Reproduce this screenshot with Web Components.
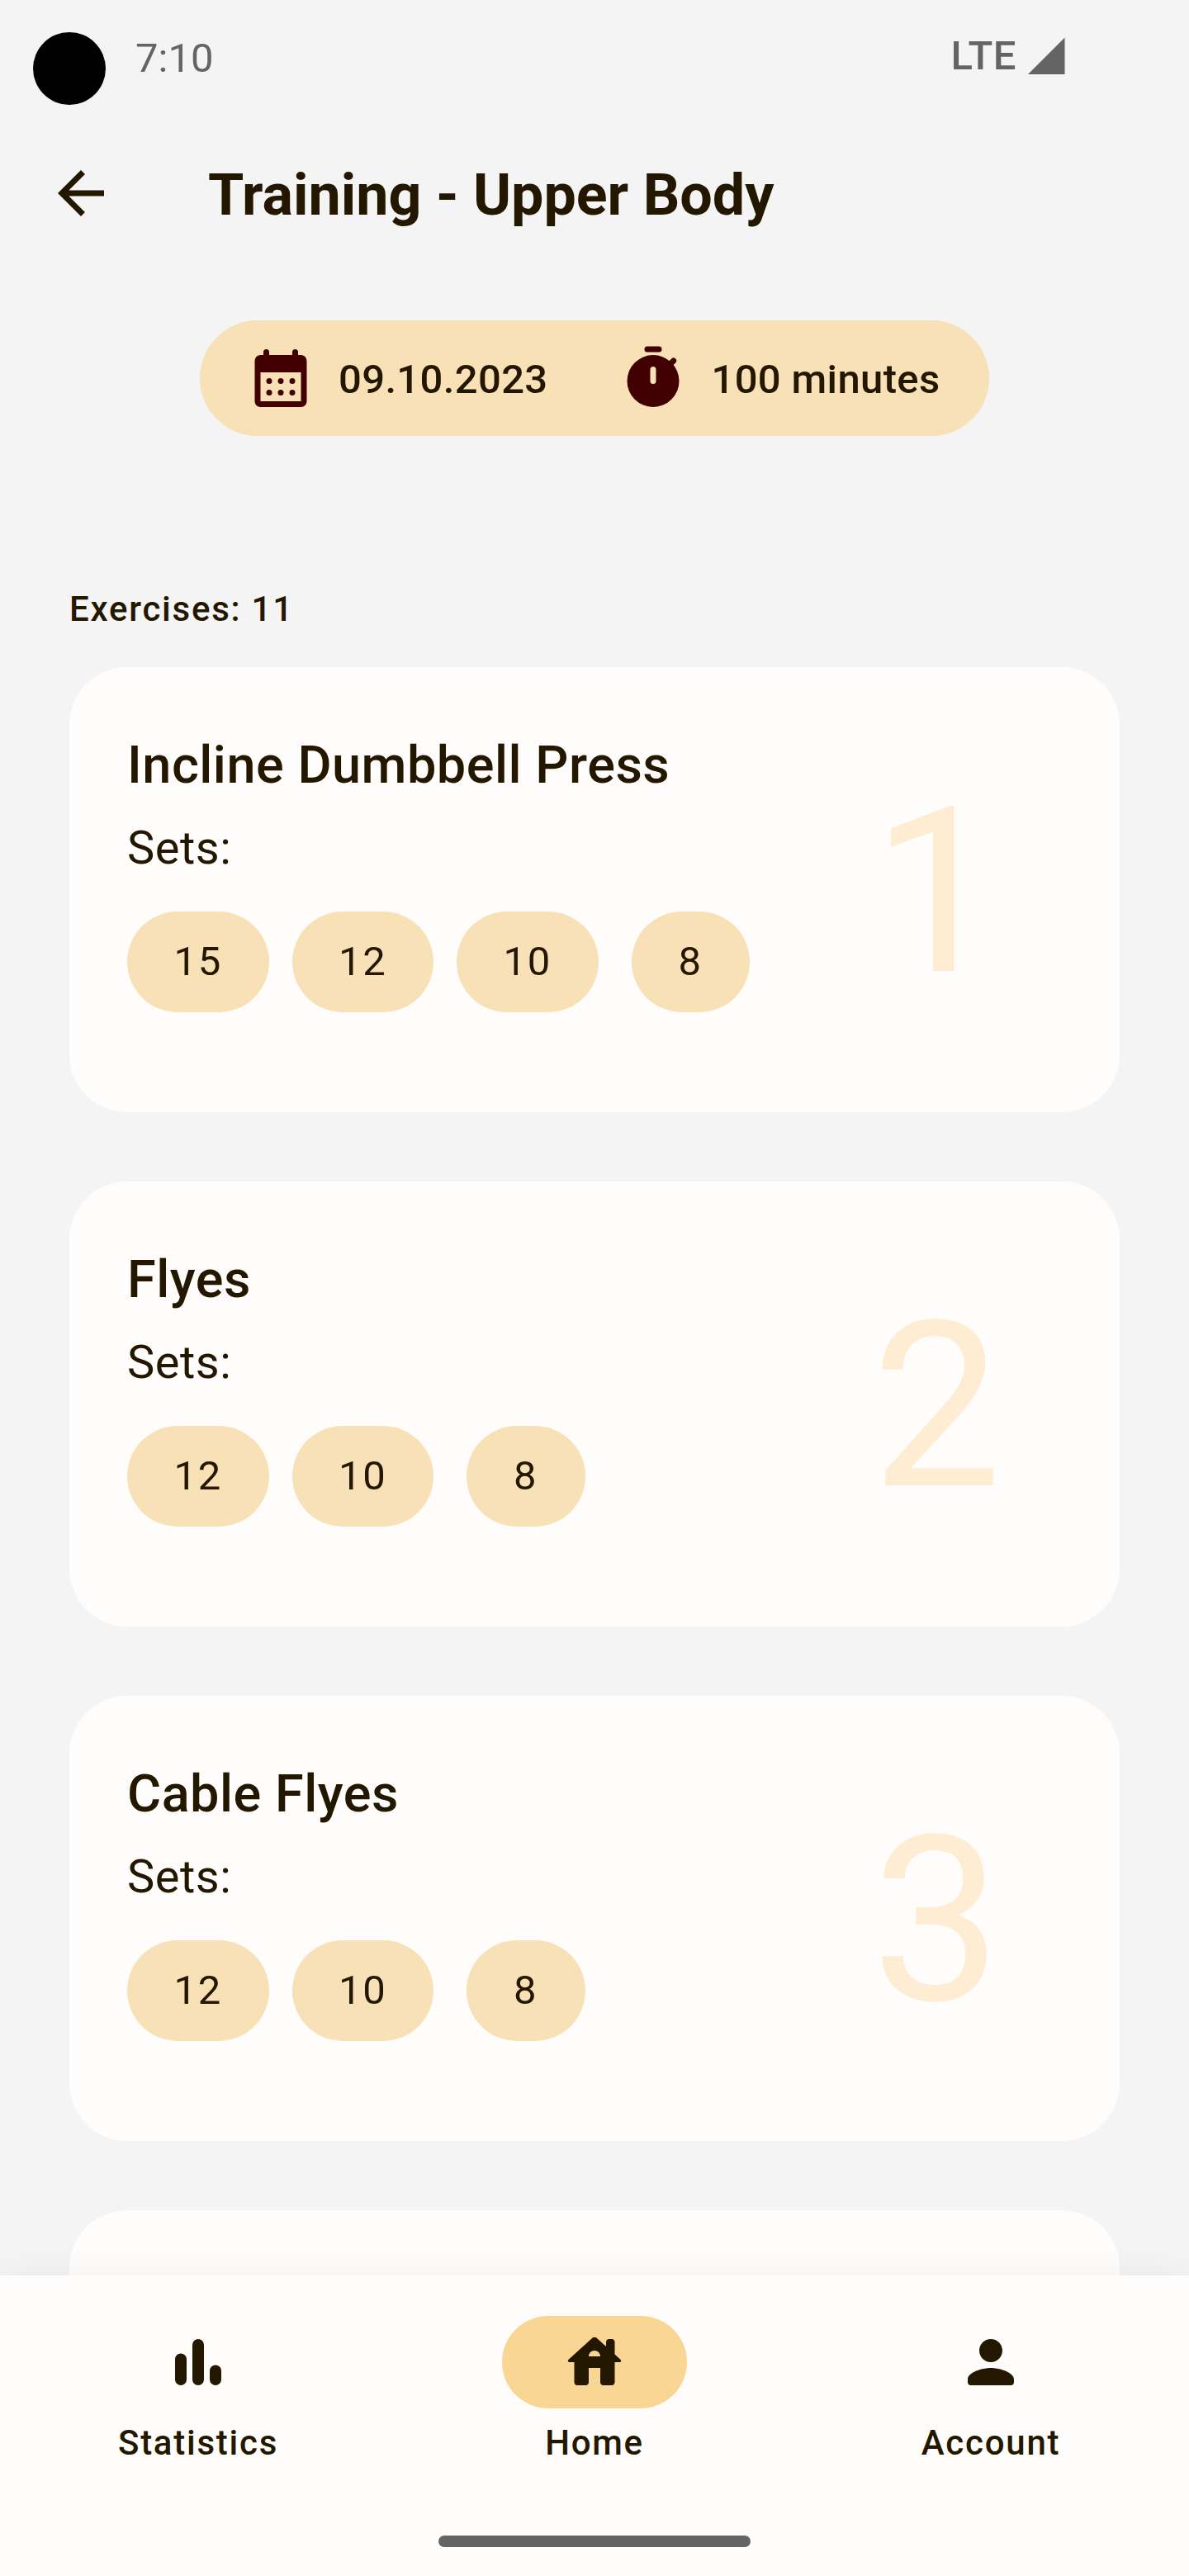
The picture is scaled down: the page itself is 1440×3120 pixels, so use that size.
<!DOCTYPE html>
<html lang="en">
<head>
<meta charset="utf-8">
<title>Training - Upper Body</title>
<style>
html,body{margin:0;height:3120px;overflow:hidden;background:#f4f4f4}
body{font-family:Roboto,"Noto Sans",sans-serif;color:#231700}
</style>
</head>
<body>
<training-screen></training-screen>
<script>
function define(name, html, setup) {
  const template = document.createElement('template');
  template.innerHTML = html;
  customElements.define(name, class extends HTMLElement {
    constructor() {
      super();
      this.attachShadow({ mode: 'open' }).append(template.content.cloneNode(true));
    }
    connectedCallback() { if (setup) setup(this, this.shadowRoot); }
  });
}

const ICONS = {
  back: '<path d="M20 11H7.83l5.59-5.59L12 4l-8 8 8 8 1.41-1.41L7.83 13H20v-2z"/>',
  calendar: '<path fill-rule="evenodd" d="M6 3a1 1 0 0 1 2 0v1h8V3a1 1 0 0 1 2 0v1h1a2 2 0 0 1 2 2v14a2 2 0 0 1-2 2H5a2 2 0 0 1-2-2V6a2 2 0 0 1 2-2h1zM5 10v10h14V10z"/><circle cx="8" cy="13" r="1"/><circle cx="12" cy="13" r="1"/><circle cx="16" cy="13" r="1"/><circle cx="8" cy="17" r="1"/><circle cx="12" cy="17" r="1"/><circle cx="16" cy="17" r="1"/>',
  timer: '<rect x="9" y="1" width="6" height="2" rx="1"/><path d="M17.2 7.8L19.05 6" stroke="currentColor" stroke-width="2" stroke-linecap="round"/><path fill-rule="evenodd" d="M12 4a9 9 0 1 0 0 18a9 9 0 0 0 0-18zM12 8a1 1 0 0 1 1 1v4a1 1 0 0 1-2 0V9a1 1 0 0 1 1-1z"/>',
  stats: '<rect x="4" y="9" width="4" height="11" rx="2"/><rect x="10" y="4" width="4" height="16" rx="2"/><rect x="16" y="13" width="4" height="7" rx="2"/>',
  home: '<path d="M19 9.3V5c0-.55-.45-1-1-1h-1c-.55 0-1 .45-1 1v1.6l-3.33-3c-.38-.34-.96-.34-1.34 0l-8.36 7.53c-.34.3-.13.87.33.87H5v7c0 .55.45 1 1 1h3c.55 0 1-.45 1-1v-5h4v5c0 .55.45 1 1 1h3c.55 0 1-.45 1-1v-7h1.7c.46 0 .68-.57.33-.87L19 9.3zM10 10c0-1.1.9-2 2-2s2 .9 2 2h-4z"/>',
  person: '<path d="M12 12c2.21 0 4-1.79 4-4s-1.79-4-4-4-4 1.79-4 4 1.79 4 4 4zm0 2c-2.67 0-8 1.34-8 4v1c0 .55.45 1 1 1h14c.55 0 1-.45 1-1v-1c0-2.66-5.33-4-8-4z"/>'
};

define('app-icon', `<style>:host{display:block;width:84px;height:84px;flex:none}svg{display:block;width:84px;height:84px;fill:currentColor}</style><svg viewBox="0 0 24 24"></svg>`,
  (el, root) => { root.querySelector('svg').innerHTML = ICONS[el.getAttribute('name')]; });

define('status-bar', `<style>
:host{display:flex;align-items:flex-start;height:148px;box-sizing:border-box;padding:0 150px 0 40px;color:#646464}
.camera{width:88px;height:88px;margin-top:39px;border-radius:50%;background:#000}
.time{margin:42px 0 0 36px;font-size:49px;line-height:57px}
.net{margin:39px 0 0 auto;font-size:49px;line-height:57px;font-weight:500;letter-spacing:.5px}
svg{display:block;margin:45px 0 0 13px}
</style><div class="camera"></div><div class="time">7:10</div><div class="net">LTE</div>
<svg width="46" height="46" viewBox="0 0 46 46"><path d="M1 45L45.5 .5V45Z" fill="#646464"/></svg>`);

define('top-bar', `<style>
:host{display:flex;align-items:center;height:172px;padding-left:56px}
h1{margin:4px 0 0 112px;font-size:70px;line-height:84px;font-weight:700;white-space:nowrap}
</style><app-icon name="back"></app-icon><h1><slot></slot></h1>`);

define('training-info', `<style>
:host{display:flex;align-items:center;align-self:center;width:956px;height:140px;box-sizing:border-box;margin-top:68px;padding:0 59.5px 0 56px;border-radius:70px;background:#f8e1b6;justify-content:space-between}
div{display:flex;align-items:center;gap:28px;font-size:49px;font-weight:500;line-height:70px;letter-spacing:.35px;white-space:nowrap}
::slotted(span){margin-top:3px}
app-icon{color:#410002}
</style><div><app-icon name="calendar"></app-icon><slot name="date"></slot></div><div><app-icon name="timer"></app-icon><slot name="time"></slot></div>`);

define('set-chip', `<style>
:host{display:flex;align-items:center;justify-content:center;width:171.5px;height:122.5px;border-radius:62px;background:#f8e1b6;font-size:49px;letter-spacing:1.75px}
:host([short]){width:143.5px;margin-left:12px}
</style><slot></slot>`);

define('exercise-card', `<style>
:host{display:flex;height:539px;box-sizing:border-box;flex:none;border-radius:70px;background:#fffdfb;padding:70px 143px 0 70px;justify-content:space-between}
h2{margin:7px 0 0;font-size:63px;line-height:84px;font-weight:500;letter-spacing:.5px;white-space:nowrap}
p{margin:16px 0 0;font-size:56px;line-height:84px;letter-spacing:.5px}
.sets{display:flex;gap:28px;margin-top:34.5px}
.n{font-size:280px;line-height:328px;color:#feedd3;margin-top:38px}
</style>`,
  (el, root) => {
    if (!el.hasAttribute('name')) return;
    const body = document.createElement('div');
    body.innerHTML = '<h2></h2><p>Sets:</p><div class="sets"></div>';
    body.querySelector('h2').textContent = el.getAttribute('name');
    for (const reps of el.getAttribute('sets').split(',')) {
      const chip = document.createElement('set-chip');
      chip.textContent = reps;
      chip.toggleAttribute('short', reps.length === 1);
      body.querySelector('.sets').append(chip);
    }
    const number = document.createElement('div');
    number.className = 'n';
    number.textContent = el.getAttribute('number');
    root.append(body, number);
  });

define('nav-item', `<style>
:host{display:flex;flex:1;flex-direction:column;align-items:center}
.pill{display:flex;align-items:center;justify-content:center;width:224px;height:112px;border-radius:56px}
:host([active]) .pill{background:#fad694}
span{margin-top:14px;font-size:42px;line-height:56px;font-weight:500;letter-spacing:1.75px}
</style><div class="pill"></div><span><slot></slot></span>`,
  (el, root) => {
    const icon = document.createElement('app-icon');
    icon.setAttribute('name', el.getAttribute('icon'));
    root.querySelector('.pill').append(icon);
  });

define('nav-bar', `<style>
:host{display:flex;flex-direction:column;align-items:center;flex:none;height:364px;box-sizing:border-box;padding-top:49px;background:#fffdfb;position:relative;box-shadow:0 0 42px rgba(0,0,0,.055)}
nav{display:flex;width:100%}
i{width:378px;height:14px;border-radius:7px;background:#646464;margin-top:auto;margin-bottom:35px}
</style><nav><slot></slot></nav><i></i>`);

define('training-screen', `<style>
:host{display:flex;flex-direction:column;width:1440px;height:3120px;overflow:hidden;background:#f4f4f4}
main{display:flex;flex-direction:column;gap:84px;flex:1;min-height:0;overflow:hidden;padding:0 84px}
.count{margin-top:182px;height:98px;box-sizing:border-box;padding-left:84px;font-size:42px;line-height:56px;font-weight:500;letter-spacing:1.75px}
</style>
<status-bar></status-bar>
<top-bar>Training - Upper Body</top-bar>
<training-info><span slot="date">09.10.2023</span><span slot="time">100 minutes</span></training-info>
<div class="count">Exercises: 11</div>
<main>
<exercise-card number="1" name="Incline Dumbbell Press" sets="15,12,10,8"></exercise-card>
<exercise-card number="2" name="Flyes" sets="12,10,8"></exercise-card>
<exercise-card number="3" name="Cable Flyes" sets="12,10,8"></exercise-card>
<exercise-card></exercise-card>
</main>
<nav-bar><nav-item icon="stats">Statistics</nav-item><nav-item icon="home" active>Home</nav-item><nav-item icon="person">Account</nav-item></nav-bar>`);
</script>
</body>
</html>
